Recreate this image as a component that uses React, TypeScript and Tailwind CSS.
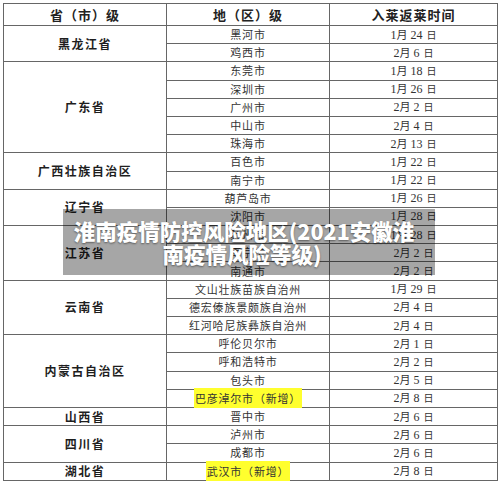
import React from "react";

type Row = { city: string; m: string; d: string; mark?: boolean };
type Group = { name: string; rows: Row[] };

const GROUPS: Group[] = [
  {
    name: "黑龙江省",
    rows: [
      { city: "黑河市", m: "1", d: "24" },
      { city: "鸡西市", m: "2", d: "6" },
    ],
  },
  {
    name: "广东省",
    rows: [
      { city: "东莞市", m: "1", d: "18" },
      { city: "深圳市", m: "1", d: "26" },
      { city: "广州市", m: "2", d: "2" },
      { city: "中山市", m: "2", d: "4" },
      { city: "珠海市", m: "2", d: "13" },
    ],
  },
  {
    name: "广西壮族自治区",
    rows: [
      { city: "百色市", m: "1", d: "22" },
      { city: "南宁市", m: "1", d: "22" },
    ],
  },
  {
    name: "辽宁省",
    rows: [
      { city: "葫芦岛市", m: "1", d: "26" },
      { city: "沈阳市", m: "1", d: "28" },
    ],
  },
  {
    name: "江苏省",
    rows: [
      { city: "苏州市", m: "1", d: "28" },
      { city: "南京市", m: "2", d: "2" },
      { city: "南通市", m: "2", d: "2" },
    ],
  },
  {
    name: "云南省",
    rows: [
      { city: "文山壮族苗族自治州", m: "1", d: "29" },
      { city: "德宏傣族景颇族自治州", m: "2", d: "4" },
      { city: "红河哈尼族彝族自治州", m: "2", d: "4" },
    ],
  },
  {
    name: "内蒙古自治区",
    rows: [
      { city: "呼伦贝尔市", m: "2", d: "1" },
      { city: "呼和浩特市", m: "2", d: "2" },
      { city: "包头市", m: "2", d: "5" },
      { city: "巴彦淖尔市（新增）", m: "2", d: "8", mark: true },
    ],
  },
  { name: "山西省", rows: [{ city: "晋中市", m: "2", d: "6" }] },
  {
    name: "四川省",
    rows: [
      { city: "泸州市", m: "2", d: "6" },
      { city: "成都市", m: "2", d: "6" },
    ],
  },
  {
    name: "湖北省",
    rows: [{ city: "武汉市（新增）", m: "2", d: "8", mark: true }],
  },
];

const cell = "border border-[#666] p-0 text-center align-middle";

export default function App() {
  return (
    <div className="relative w-[500px] h-[486px] bg-white overflow-hidden font-['Noto_Sans_CJK_SC',sans-serif]">
      <div className="pt-[3px] pl-[3px]">
        <table className="table-fixed border-collapse w-[494px]">
          <colgroup>
            <col className="w-[163px]" />
            <col className="w-[163px]" />
            <col className="w-[168px]" />
          </colgroup>
          <thead>
            <tr className="h-[22px]">
              <th className={`${cell} text-[13px] font-bold tracking-[1px] text-[#222] leading-none`}>省（市）级</th>
              <th className={`${cell} text-[13px] font-bold tracking-[1px] text-[#222] leading-none`}>地（区）级</th>
              <th className={`${cell} text-[13px] font-bold tracking-[1px] text-[#222] leading-none`}>入莱返莱时间</th>
            </tr>
          </thead>
          <tbody>
            {GROUPS.map((g) =>
              g.rows.map((r, i) => (
                <tr key={g.name + r.city} className="h-[18.2px]">
                  {i === 0 && (
                    <td
                      rowSpan={g.rows.length}
                      className={`${cell} text-[12px] font-bold tracking-[1.5px] text-[#1e1e1e] leading-none`}
                    >
                      {g.name}
                    </td>
                  )}
                  <td className={`${cell} text-[11px] tracking-[0.8px] text-[#333] leading-none`}>
                    {r.mark ? (
                      <span className="bg-[#ffff2e] px-[1px] py-[2px]">{r.city}</span>
                    ) : (
                      r.city
                    )}
                  </td>
                  <td className={`${cell} text-[12px] text-[#333] leading-none font-['Liberation_Serif','Noto_Sans_CJK_SC',serif]`}>
                    {r.m}
                    <span className="text-[11px] font-['Noto_Sans_CJK_SC',sans-serif]">月</span> {r.d}
                    <span className="ml-[4px] text-[10px] font-['Noto_Sans_CJK_SC',sans-serif]">日</span>
                  </td>
                </tr>
              ))
            )}
          </tbody>
        </table>
      </div>

      <div className="absolute left-[63px] top-[209px] w-[372px] h-[66px] bg-black/35 flex flex-col items-center justify-center text-white font-black text-[21.5px] leading-[23px] [text-shadow:0_1px_2px_rgba(0,0,0,0.45)]">
        <span className="-ml-[10px]">淮南疫情防控风险地区(2021安徽淮</span>
        <span className="-ml-[14px]">南疫情风险等级)</span>
      </div>
    </div>
  );
}
